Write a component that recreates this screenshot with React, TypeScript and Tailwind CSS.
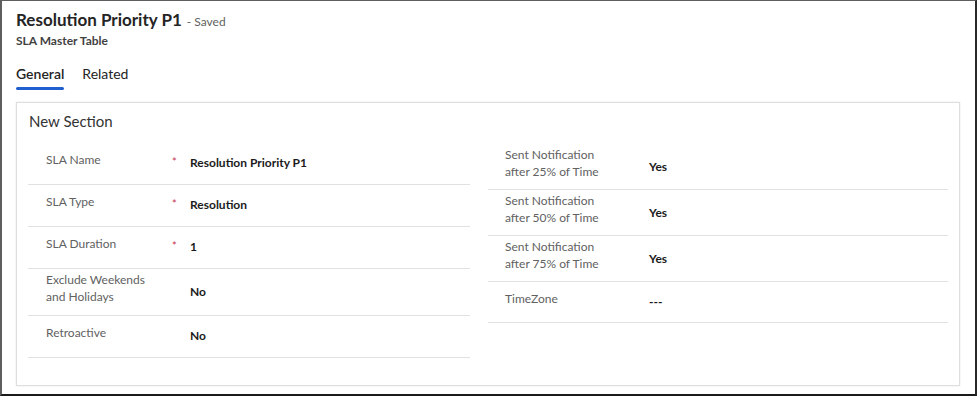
import React from "react";

type RowProps = {
  label: React.ReactNode;
  value: string;
  required?: boolean;
  right?: boolean;
};

function Row({ label, value, required, right }: RowProps) {
  return (
    <div
      className={
        "flex border-b border-[#e1e1e1] " + (right ? "pb-[7px]" : "pb-[8px]")
      }
    >
      <div className="flex min-h-[33px] w-full items-center">
        <div
          className={
            "py-[2px] text-[12px] leading-[17px] text-[#616161] " +
            (right ? "w-[161px] pl-[17px]" : "w-[144px] pl-[18px]")
          }
        >
          {label}
        </div>
        {!right && (
          <div className="w-[18px] self-center pt-[4px] text-[11px] leading-[12px] text-[#c4314b]">
            {required ? "*" : ""}
          </div>
        )}
        <div className="pt-[6px] text-[12px] font-bold leading-[17px] text-[#1b1b1b]">
          {value}
        </div>
      </div>
    </div>
  );
}

export default function App() {
  return (
    <div className="h-[396px] w-[977px] border-b-2 border-l-2 border-r-2 border-t border-b-[#1a1a1a] border-l-[#5e5e5e] border-r-[#2a2a2a] border-t-[#5e5e5e] bg-white font-['Lato',sans-serif]">
      <div className="pl-[14px] pt-[7px]">
        <div className="flex items-baseline gap-[5px]">
          <span className="text-[17px] font-bold leading-[24px] text-[#242424]">
            Resolution Priority P1
          </span>
          <span className="text-[12px] leading-[16px] text-[#616161]">- Saved</span>
        </div>
        <div className="mt-[1px] text-[12px] font-bold leading-[16px] text-[#424242]">
          SLA Master Table
        </div>
        <div className="mt-[15px] flex gap-[18px]">
          <div className="flex flex-col">
            <span className="text-[14px] font-semibold leading-[20px] text-[#242424]">
              General
            </span>
            <div className="mt-[3px] h-[3px] rounded-full bg-[#1f5fcf]" />
          </div>
          <div className="flex flex-col">
            <span className="text-[14px] leading-[20px] text-[#242424]">Related</span>
          </div>
        </div>
      </div>
      <div className="ml-[14px] mt-[12px] w-[944px] border border-[#dedede] px-[11px] pb-[27px] pt-[7px] shadow-[0_0_2px_rgba(0,0,0,0.10)]">
        <div className="pl-[1px] text-[15px] leading-[22px] text-[#333333]">New Section</div>
        <div className="mt-[11px] flex gap-[18px]">
          <div className="w-[442px]">
            <Row label="SLA Name" value="Resolution Priority P1" required />
            <Row label="SLA Type" value="Resolution" required />
            <Row label="SLA Duration" value="1" required />
            <Row
              label={
                <>
                  Exclude Weekends
                  <br />
                  and Holidays
                </>
              }
              value="No"
            />
            <Row label="Retroactive" value="No" />
          </div>
          <div className="w-[460px] pt-[1px]">
            <Row
              right
              label={
                <>
                  Sent Notification
                  <br />
                  after 25% of Time
                </>
              }
              value="Yes"
            />
            <Row
              right
              label={
                <>
                  Sent Notification
                  <br />
                  after 50% of Time
                </>
              }
              value="Yes"
            />
            <Row
              right
              label={
                <>
                  Sent Notification
                  <br />
                  after 75% of Time
                </>
              }
              value="Yes"
            />
            <Row right label="TimeZone" value="---" />
          </div>
        </div>
      </div>
    </div>
  );
}
